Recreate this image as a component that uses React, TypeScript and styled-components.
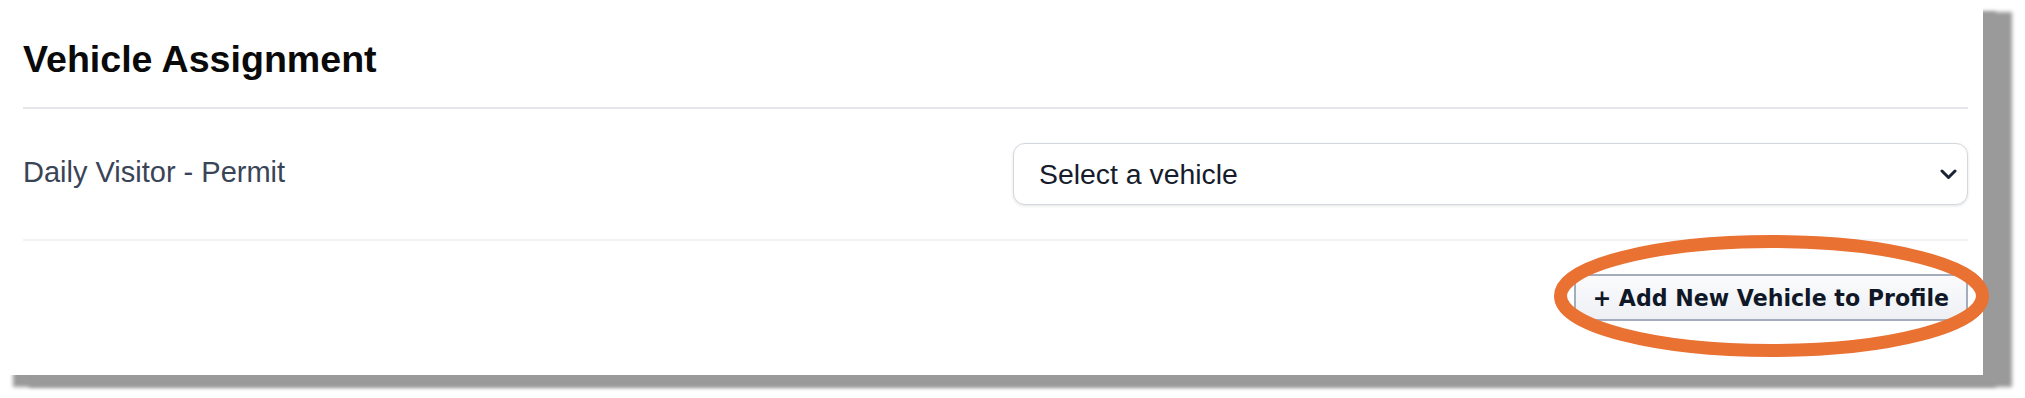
import React from "react";
import styled, { createGlobalStyle } from "styled-components";

const GlobalStyle = createGlobalStyle`
  html, body {
    margin: 0;
    padding: 0;
    background: #ffffff;
  }
  body {
    font-family: "Liberation Sans", Arial, sans-serif;
  }
  * { box-sizing: border-box; }
`;

const Page = styled.div`
  width: 2025px;
  height: 398px;
  background: #ffffff;
  overflow: hidden;
`;

const Panel = styled.section`
  width: 1983px;
  height: 375px;
  background: #ffffff;
  padding: 0 15px 0 23px;
  display: flex;
  flex-direction: column;
  box-shadow: 29px 12px 4px #9a9a9a, 13px 12px 4px #9a9a9a;
`;

const Header = styled.header`
  padding: 41px 0 29px;
  border-bottom: 2px solid #e6e7eb;
`;

const Title = styled.h2`
  margin: 0;
  font-family: "Liberation Sans", Arial, sans-serif;
  font-weight: 700;
  font-size: 37.6px;
  line-height: 37px;
  color: #0a0a0a;
`;

const Row = styled.div`
  display: grid;
  grid-template-columns: 1fr 1fr;
  column-gap: 35px;
  align-items: center;
  height: 132px;
  border-bottom: 2px solid #f1f2f4;
`;

const Label = styled.span`
  font-family: "Liberation Sans", Arial, sans-serif;
  font-size: 29px;
  color: #3a4457;
  padding-bottom: 4px;
`;

const SelectWrap = styled.div`
  position: relative;
  height: 62px;
`;

const Select = styled.select`
  appearance: none;
  -webkit-appearance: none;
  width: 100%;
  height: 62px;
  border: 1px solid #d3d7de;
  border-radius: 12px;
  background: #ffffff;
  box-shadow: 0 1px 3px rgba(15, 23, 42, 0.12);
  padding: 0 40px 0 25px;
  font-family: "Liberation Sans", Arial, sans-serif;
  font-size: 28.4px;
  color: #161c2b;
  outline: none;
`;

const Chevron = styled.svg`
  position: absolute;
  right: 11px;
  top: 26px;
  width: 17px;
  height: 11px;
  pointer-events: none;
`;

const Footer = styled.div`
  display: flex;
  justify-content: flex-end;
  padding-top: 33px;
`;

const ButtonWrap = styled.div`
  position: relative;
`;

const AddButton = styled.button`
  height: 47px;
  padding: 0 17px;
  border: 2px solid #a4adbd;
  border-radius: 2px;
  background: linear-gradient(#fbfbfd, #eef0f4);
  font-family: "DejaVu Sans", Verdana, sans-serif;
  font-weight: 700;
  font-size: 22.1px;
  color: #101828;
  cursor: pointer;
`;

const Annotation = styled.svg`
  position: absolute;
  right: -28px;
  top: -45px;
  width: 448px;
  height: 134px;
  pointer-events: none;
  overflow: visible;
`;

export default function App() {
  return (
    <Page>
      <GlobalStyle />
      <Panel>
        <Header>
          <Title>Vehicle Assignment</Title>
        </Header>
        <Row>
          <Label>Daily Visitor - Permit</Label>
          <SelectWrap>
            <Select defaultValue="">
              <option value="">Select a vehicle</option>
            </Select>
            <Chevron viewBox="0 0 17 11">
              <path
                d="M2 2 L8.5 8.5 L15 2"
                fill="none"
                stroke="#1a2236"
                strokeWidth="3"
                strokeLinecap="round"
                strokeLinejoin="round"
              />
            </Chevron>
          </SelectWrap>
        </Row>
        <Footer>
          <ButtonWrap>
            <AddButton type="button">+ Add New Vehicle to Profile</AddButton>
            <Annotation viewBox="0 0 448 134">
              <ellipse
                cx="223.5"
                cy="67"
                rx="211"
                ry="54.5"
                fill="none"
                stroke="#e97132"
                strokeWidth="13"
              />
            </Annotation>
          </ButtonWrap>
        </Footer>
      </Panel>
    </Page>
  );
}
